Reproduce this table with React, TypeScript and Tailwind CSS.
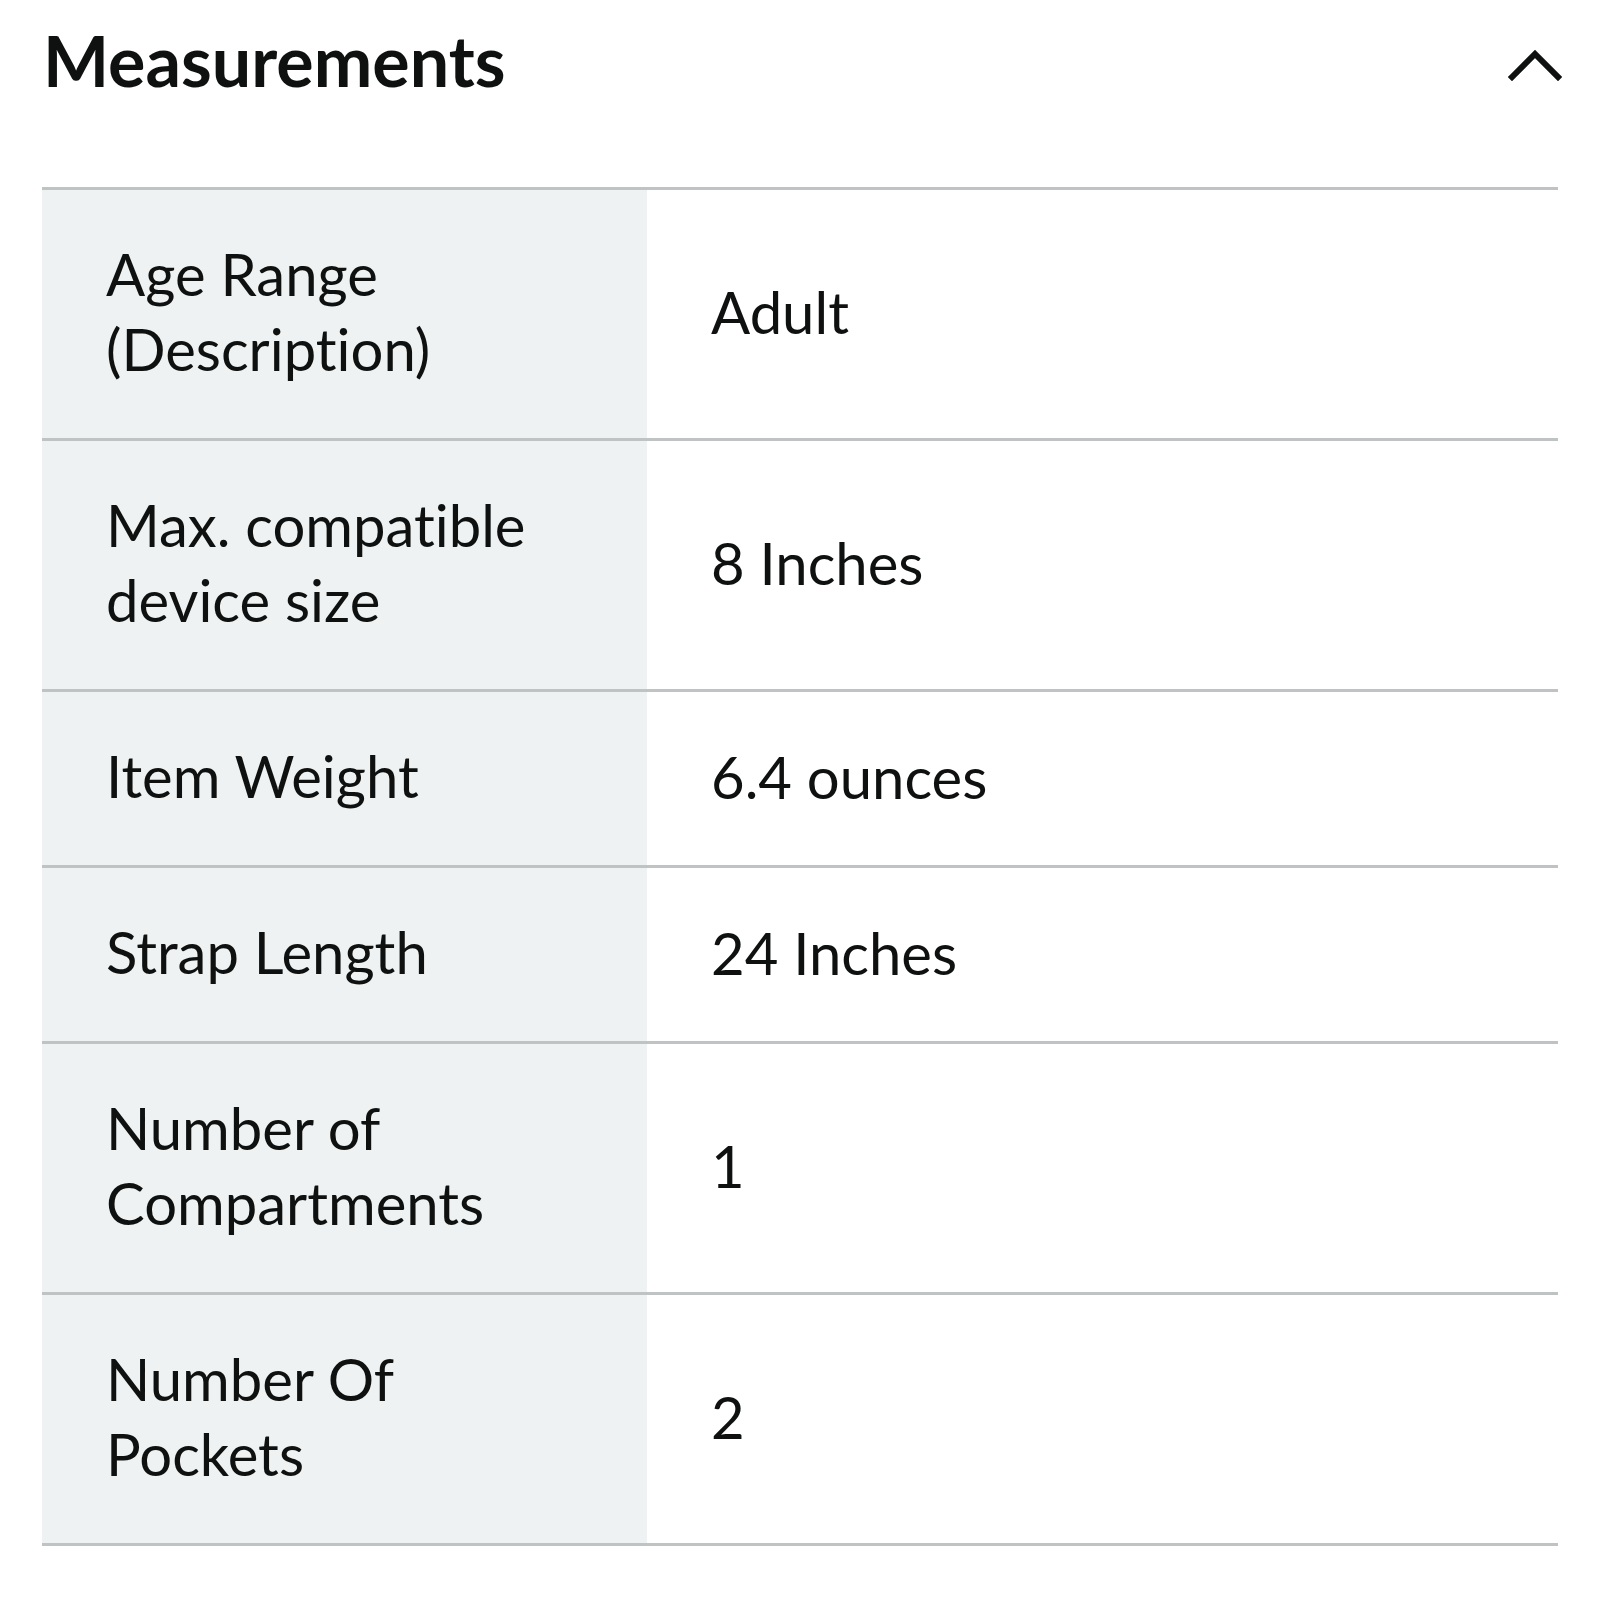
const ROWS: { label: string[]; value: string }[] = [
  { label: ["Age Range", "(Description)"], value: "Adult" },
  { label: ["Max. compatible", "device size"], value: "8 Inches" },
  { label: ["Item Weight"], value: "6.4 ounces" },
  { label: ["Strap Length"], value: "24 Inches" },
  { label: ["Number of", "Compartments"], value: "1" },
  { label: ["Number Of", "Pockets"], value: "2" },
];

export default function App() {
  return (
    <div className="min-h-[1600px] bg-white px-[42px] text-[#0f1111] font-['Lato',sans-serif] [font-variant-ligatures:none]">
      <div className="flex h-[187px] items-start justify-between">
        <h2 className="mt-[25px] pl-[1px] text-[70px] font-bold leading-none">Measurements</h2>
        <svg width="54" height="32" viewBox="0 0 54 32" className="-mr-[4px] mt-[49px]" fill="none">
          <path d="M4 28 L27 5 L50 28" stroke="#0f1111" strokeWidth="6" strokeLinecap="square" />
        </svg>
      </div>

      <div className="border-b-[3px] border-[#bfc3c3]">
        {ROWS.map((r) => (
          <div key={r.value} className="grid grid-cols-[605px_1fr] border-t-[3px] border-[#bfc3c3]">
            <div className="bg-[#eff2f2] pb-[52px] pl-[64px] pt-[46px] text-[58px] leading-[75px]">
              {r.label.map((l) => (
                <div key={l}>{l}</div>
              ))}
            </div>
            <div className="flex items-center pb-[5px] pl-[64px] text-[58px] leading-[75px]">{r.value}</div>
          </div>
        ))}
      </div>
    </div>
  );
}
